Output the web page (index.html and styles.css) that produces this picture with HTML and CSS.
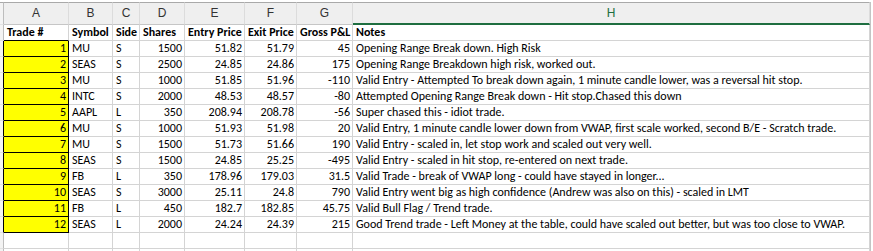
FILE: index.html
```html
<!DOCTYPE html>
<html>
<head>
<meta charset="utf-8">
<link rel="stylesheet" href="styles.css">
</head>
<body>
<div class="sheet">
  <div class="row colhead">
    <div class="c stub"></div>
    <div class="c">A</div><div class="c">B</div><div class="c">C</div><div class="c">D</div>
    <div class="c">E</div><div class="c">F</div><div class="c">G</div><div class="c sel">H</div>
  </div>
  <div class="row head">
    <div class="c stub"></div>
    <div class="c">Trade #</div><div class="c">Symbol</div><div class="c">Side</div><div class="c">Shares</div>
    <div class="c">Entry Price</div><div class="c">Exit Price</div><div class="c">Gross P&amp;L</div><div class="c">Notes</div>
  </div>
  <div class="row data"><div class="c stub"></div><div class="c n y">1</div><div class="c">MU</div><div class="c">S</div><div class="c n">1500</div><div class="c n">51.82</div><div class="c n">51.79</div><div class="c n">45</div><div class="c">Opening Range Break down. High Risk</div></div>
  <div class="row data"><div class="c stub"></div><div class="c n y">2</div><div class="c">SEAS</div><div class="c">S</div><div class="c n">2500</div><div class="c n">24.85</div><div class="c n">24.86</div><div class="c n">175</div><div class="c">Opening Range Breakdown high risk, worked out.</div></div>
  <div class="row data"><div class="c stub"></div><div class="c n y">3</div><div class="c">MU</div><div class="c">S</div><div class="c n">1000</div><div class="c n">51.85</div><div class="c n">51.96</div><div class="c n">-110</div><div class="c">Valid Entry - Attempted To break down again, 1 minute candle lower, was a reversal hit stop.</div></div>
  <div class="row data"><div class="c stub"></div><div class="c n y">4</div><div class="c">INTC</div><div class="c">S</div><div class="c n">2000</div><div class="c n">48.53</div><div class="c n">48.57</div><div class="c n">-80</div><div class="c">Attempted Opening Range Break down - Hit stop.Chased this down</div></div>
  <div class="row data"><div class="c stub"></div><div class="c n y">5</div><div class="c">AAPL</div><div class="c">L</div><div class="c n">350</div><div class="c n">208.94</div><div class="c n">208.78</div><div class="c n">-56</div><div class="c">Super chased this - idiot trade.</div></div>
  <div class="row data"><div class="c stub"></div><div class="c n y">6</div><div class="c">MU</div><div class="c">S</div><div class="c n">1000</div><div class="c n">51.93</div><div class="c n">51.98</div><div class="c n">20</div><div class="c">Valid Entry, 1 minute candle lower down from VWAP, first scale worked, second B/E - Scratch trade.</div></div>
  <div class="row data"><div class="c stub"></div><div class="c n y">7</div><div class="c">MU</div><div class="c">S</div><div class="c n">1500</div><div class="c n">51.73</div><div class="c n">51.66</div><div class="c n">190</div><div class="c">Valid Entry - scaled in, let stop work and scaled out very well.</div></div>
  <div class="row data"><div class="c stub"></div><div class="c n y">8</div><div class="c">SEAS</div><div class="c">S</div><div class="c n">1500</div><div class="c n">24.85</div><div class="c n">25.25</div><div class="c n">-495</div><div class="c">Valid Entry - scaled in hit stop, re-entered on next trade.</div></div>
  <div class="row data"><div class="c stub"></div><div class="c n y">9</div><div class="c">FB</div><div class="c">L</div><div class="c n">350</div><div class="c n">178.96</div><div class="c n">179.03</div><div class="c n">31.5</div><div class="c">Valid Trade - break of VWAP long - could have stayed in longer...</div></div>
  <div class="row data"><div class="c stub"></div><div class="c n y">10</div><div class="c">SEAS</div><div class="c">S</div><div class="c n">3000</div><div class="c n">25.11</div><div class="c n">24.8</div><div class="c n">790</div><div class="c">Valid Entry went big as high confidence (Andrew was also on this) - scaled in LMT</div></div>
  <div class="row data"><div class="c stub"></div><div class="c n y">11</div><div class="c">FB</div><div class="c">L</div><div class="c n">450</div><div class="c n">182.7</div><div class="c n">182.85</div><div class="c n">45.75</div><div class="c">Valid Bull Flag / Trend trade.</div></div>
  <div class="row data"><div class="c stub"></div><div class="c n y">12</div><div class="c">SEAS</div><div class="c">L</div><div class="c n">2000</div><div class="c n">24.24</div><div class="c n">24.39</div><div class="c n">215</div><div class="c">Good Trend trade - Left Money at the table, could have scaled out better, but was too close to VWAP.</div></div>
  <div class="row blank"><div class="c stub"></div><div class="c"></div><div class="c"></div><div class="c"></div><div class="c"></div><div class="c"></div><div class="c"></div><div class="c"></div><div class="c"></div></div>
  <div class="row blank"><div class="c stub"></div><div class="c"></div><div class="c"></div><div class="c"></div><div class="c"></div><div class="c"></div><div class="c"></div><div class="c"></div><div class="c"></div></div>
</div>
</body>
</html>
```
FILE: styles.css
```css
html, body {
  margin: 0;
  background: #ffffff;
}
.sheet {
  box-sizing: border-box;
  padding-top: 2px;
  width: 873px;
  height: 251px;
  overflow: hidden;
}
.row {
  display: grid;
  grid-template-columns: 4px 65px 44px 27px 45px 60px 52px 56px 517px;
  width: 870px;
  border-right: 1px solid #c4c4c4;
}
.c {
  box-sizing: border-box;
  border-right: 1px solid #d4d4d4;
  border-bottom: 1px solid #d4d4d4;
  white-space: nowrap;
  overflow: visible;
  padding: 0 2px 0 3px;
  font-family: Carlito, "Liberation Sans", sans-serif;
  font-size: 12px;
  color: #000000;
}
.colhead .c {
  height: 23px;
  background: #efefef;
  border-top: 1px solid #a9a9a9;
  border-bottom: 1px solid #c6c6c6;
  border-right: 1px solid #dcdcdc;
  font-family: "Liberation Sans", sans-serif;
  font-size: 12px;
  color: #333333;
  text-align: center;
  line-height: 21px;
  padding: 0;
}
.colhead .c.sel {
  border-bottom: 2px solid #1e6e40;
  color: #1e6e40;
  line-height: 20px;
}
.colhead .c.stub {
  border-right-color: #bdbdbd;
}
.head .c, .data .c, .blank .c {
  height: 16px;
  line-height: 15px;
}
.head .c {
  font-weight: bold;
}
.head .c:nth-child(2) {
  border-bottom-color: #000000;
}
.c.stub {
  background: #f3f3f3;
  padding: 0;
  border-bottom-color: #e2e2e2;
  border-right-color: #bdbdbd;
}
.data .c.stub {
  border-right-color: #000000;
}
.c.n {
  text-align: right;
}
.c.y {
  background: #ffff00;
  border-right-color: #000000;
  border-bottom-color: #000000;
}
```
